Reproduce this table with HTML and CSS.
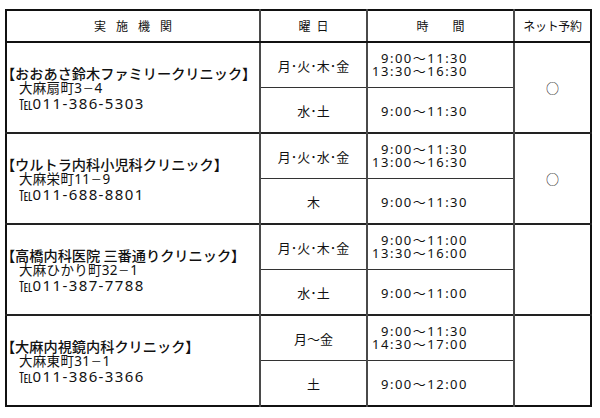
FILE: index.html
```html
<!DOCTYPE html>
<html lang="ja">
<head>
<meta charset="utf-8">
<title>実施機関</title>
<link rel="stylesheet" href="styles.css">
</head>
<body>
<table class="schedule">
  <colgroup>
    <col class="c-name"><col class="c-day"><col class="c-time"><col class="c-net">
  </colgroup>
  <thead>
    <tr class="head">
      <th class="h-name">実施機関</th>
      <th class="h-day">曜日</th>
      <th class="h-time">時　　間</th>
      <th class="h-net">ネット予約</th>
    </tr>
  </thead>
  <tbody class="group">
    <tr class="top">
      <td class="name" rowspan="2">
        <div class="clinic">【おおあさ鈴木ファミリークリニック】</div>
        <div class="addr">大麻扇町3<span class="dash">－</span>4</div>
        <div class="tel"><span class="tl">℡</span>011-386-5303</div>
      </td>
      <td class="day">月･火･木･金</td>
      <td class="time"><div class="tw">9:00～11:30<br>13:30～16:30</div></td>
      <td class="net" rowspan="2">○</td>
    </tr>
    <tr class="bottom">
      <td class="day">水･土</td>
      <td class="time"><div class="tw">9:00～11:30</div></td>
    </tr>
  </tbody>
  <tbody class="group">
    <tr class="top">
      <td class="name" rowspan="2">
        <div class="clinic">【ウルトラ内科小児科クリニック】</div>
        <div class="addr">大麻栄町11<span class="dash">－</span>9</div>
        <div class="tel"><span class="tl">℡</span>011-688-8801</div>
      </td>
      <td class="day">月･火･水･金</td>
      <td class="time"><div class="tw">9:00～11:30<br>13:00～16:30</div></td>
      <td class="net" rowspan="2">○</td>
    </tr>
    <tr class="bottom">
      <td class="day">木</td>
      <td class="time"><div class="tw">9:00～11:30</div></td>
    </tr>
  </tbody>
  <tbody class="group">
    <tr class="top">
      <td class="name" rowspan="2">
        <div class="clinic">【高橋内科医院 三番通りクリニック】</div>
        <div class="addr">大麻ひかり町32<span class="dash">－</span>1</div>
        <div class="tel"><span class="tl">℡</span>011-387-7788</div>
      </td>
      <td class="day">月･火･木･金</td>
      <td class="time"><div class="tw">9:00～11:00<br>13:30～16:00</div></td>
      <td class="net" rowspan="2"></td>
    </tr>
    <tr class="bottom">
      <td class="day">水･土</td>
      <td class="time"><div class="tw">9:00～11:00</div></td>
    </tr>
  </tbody>
  <tbody class="group">
    <tr class="top">
      <td class="name" rowspan="2">
        <div class="clinic">【大麻内視鏡内科クリニック】</div>
        <div class="addr">大麻東町31<span class="dash">－</span>1</div>
        <div class="tel"><span class="tl">℡</span>011-386-3366</div>
      </td>
      <td class="day">月～金</td>
      <td class="time"><div class="tw">9:00～11:30<br>14:30～17:00</div></td>
      <td class="net" rowspan="2"></td>
    </tr>
    <tr class="bottom">
      <td class="day">土</td>
      <td class="time"><div class="tw">9:00～12:00</div></td>
    </tr>
  </tbody>
</table>
</body>
</html>
```
FILE: styles.css
```css
html, body {
  margin: 0;
  padding: 0;
  background: #fff;
}

body {
  font-family: "Noto Sans", "Noto Sans CJK JP", sans-serif;
  color: #111;
}

.schedule {
  border-collapse: collapse;
  table-layout: fixed;
  width: 587px;
  margin: 9px 0 0 5px;
  border: 2px solid #111;
}

.c-name { width: 254px; }
.c-day { width: 107px; }
.c-time { width: 147px; }
.c-net { width: 77px; }

th, td {
  padding: 0;
}

.head th {
  height: 30px;
  border-bottom: 2px solid #111;
  font-weight: 400;
  font-size: 12px;
  font-family: "Noto Sans CJK JP", sans-serif;
  text-align: center;
  vertical-align: middle;
  line-height: 14px;
}

.head th + th {
  border-left: 2px solid #4a4a4a;
}

.h-name { letter-spacing: 10px; text-indent: 10px; }
.h-day { letter-spacing: 6px; text-indent: 6px; }
.h-net { font-size: 11.5px; letter-spacing: -0.3px; }

.group > tr > td {
  height: 44px;
  vertical-align: middle;
}

.group > tr.top > td {
  border-top: 2px solid #222;
}

.group > tr.bottom > td {
  border-top: 1px solid #333;
}

.day, .time, .net {
  border-left: 2px solid #4a4a4a;
}

.name {
  padding-left: 1px;
  text-align: left;
}

.clinic {
  font-family: "Noto Sans CJK JP", sans-serif;
  font-weight: 500;
  font-size: 14.2px;
  line-height: 16px;
  letter-spacing: 0;
  font-feature-settings: "halt";
  white-space: nowrap;
}

.addr, .tel {
  padding-left: 11px;
  line-height: 15px;
  white-space: nowrap;
}

.addr {
  font-size: 13.5px;
  letter-spacing: 0.3px;
}

.dash {
  font-family: "Noto Sans CJK JP", sans-serif;
  font-size: 11px;
  margin: 0 0.5px;
}

.tel {
  font-size: 15px;
  letter-spacing: 1.4px;
}

.tl {
  font-family: "Noto Sans CJK JP", sans-serif;
  font-size: 13.5px;
  letter-spacing: 0;
}

.day {
  text-align: center;
  font-family: "Noto Sans CJK JP", sans-serif;
  font-size: 13px;
}

.time {
  text-align: left;
  padding-left: 2px;
}

.tw {
  display: inline-block;
  width: 98px;
  text-align: right;
  vertical-align: middle;
  font-size: 13px;
  line-height: 13px;
  letter-spacing: 1.5px;
  white-space: nowrap;
}

.net {
  text-align: center;
  font-family: "Noto Sans CJK JP", sans-serif;
  font-size: 13px;
}
```
